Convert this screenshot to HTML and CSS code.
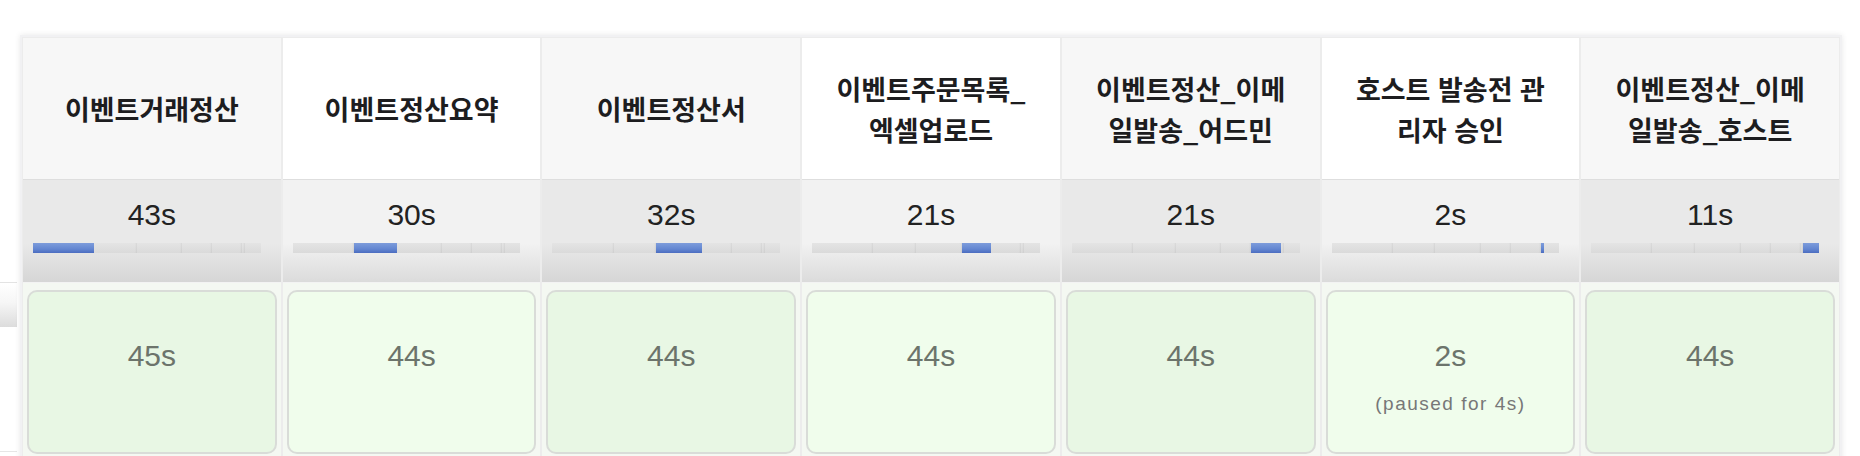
FILE: index.html
```html
<!DOCTYPE html>
<html lang="ko">
<head>
<meta charset="utf-8">
<title>Stage View</title>
<link rel="stylesheet" href="styles.css">
</head>
<body>
<div class="view">
  <div class="history">
    <div class="hist-head"></div>
    <div class="hist-body"></div>
  </div>
  <div class="stages">
    <div class="grid">
      <div class="hd odd">이벤트거래정산</div>
      <div class="hd even">이벤트정산요약</div>
      <div class="hd odd">이벤트정산서</div>
      <div class="hd even">이벤트주문목록_<br>엑셀업로드</div>
      <div class="hd odd">이벤트정산_이메<br>일발송_어드민</div>
      <div class="hd even">호스트 발송전 관<br>리자 승인</div>
      <div class="hd odd">이벤트정산_이메<br>일발송_호스트</div>

      <div class="avg odd"><div class="avg-time">43s</div>
        <div class="bar"><span class="seg s1 on"></span><span class="seg s2"></span><span class="seg s3"></span><span class="seg s4"></span><span class="seg s5"></span><span class="seg s6"></span><span class="seg s7"></span></div></div>
      <div class="avg even"><div class="avg-time">30s</div>
        <div class="bar"><span class="seg s1"></span><span class="seg s2 on"></span><span class="seg s3"></span><span class="seg s4"></span><span class="seg s5"></span><span class="seg s6"></span><span class="seg s7"></span></div></div>
      <div class="avg odd"><div class="avg-time">32s</div>
        <div class="bar"><span class="seg s1"></span><span class="seg s2"></span><span class="seg s3 on"></span><span class="seg s4"></span><span class="seg s5"></span><span class="seg s6"></span><span class="seg s7"></span></div></div>
      <div class="avg even"><div class="avg-time">21s</div>
        <div class="bar"><span class="seg s1"></span><span class="seg s2"></span><span class="seg s3"></span><span class="seg s4 on"></span><span class="seg s5"></span><span class="seg s6"></span><span class="seg s7"></span></div></div>
      <div class="avg odd"><div class="avg-time">21s</div>
        <div class="bar"><span class="seg s1"></span><span class="seg s2"></span><span class="seg s3"></span><span class="seg s4"></span><span class="seg s5 on"></span><span class="seg s6"></span><span class="seg s7"></span></div></div>
      <div class="avg even"><div class="avg-time">2s</div>
        <div class="bar"><span class="seg s1"></span><span class="seg s2"></span><span class="seg s3"></span><span class="seg s4"></span><span class="seg s5"></span><span class="seg s6 on"></span><span class="seg s7"></span></div></div>
      <div class="avg odd"><div class="avg-time">11s</div>
        <div class="bar"><span class="seg s1"></span><span class="seg s2"></span><span class="seg s3"></span><span class="seg s4"></span><span class="seg s5"></span><span class="seg s6"></span><span class="seg s7 on"></span></div></div>

      <div class="run odd"><div class="box"><div class="dur">45s</div></div></div>
      <div class="run even"><div class="box"><div class="dur">44s</div></div></div>
      <div class="run odd"><div class="box"><div class="dur">44s</div></div></div>
      <div class="run even"><div class="box"><div class="dur">44s</div></div></div>
      <div class="run odd"><div class="box"><div class="dur">44s</div></div></div>
      <div class="run even"><div class="box"><div class="dur">2s</div><div class="paused">(paused for 4s)</div></div></div>
      <div class="run odd"><div class="box"><div class="dur">44s</div></div></div>
    </div>
  </div>
</div>
</body>
</html>
```

FILE: styles.css
```css
html, body {
  margin: 0;
  padding: 0;
  background: #ffffff;
  overflow: hidden;
}

body {
  font-family: "Liberation Sans", Arial, sans-serif;
  color: #222;
}

.view {
  display: flex;
  align-items: flex-start;
  height: 456px;
}

.history {
  width: 17px;
  flex: none;
  padding-top: 282px;
}

.hist-head {
  height: 44px;
  border-top: 1px solid #e3e3e3;
  background: linear-gradient(#ffffff 0%, #f6f6f6 45%, #dcdcdc 100%);
}

.hist-body {
  height: 124px;
  border-bottom: 1px solid #e6e6e6;
}

.stages {
  margin-top: 35px;
  margin-left: 3px;
  width: 1818px;
  border: 2px solid #f1f1f3;
  border-bottom: 0;
  box-shadow: 0 0 6px rgba(0, 0, 0, 0.09);
  background: #ececec;
}

.grid {
  display: grid;
  grid-template-columns: repeat(7, 1fr);
  column-gap: 2px;
  padding: 1px 1px 0;
}

/* header row */
.hd {
  height: 141px;
  display: flex;
  align-items: center;
  justify-content: center;
  text-align: center;
  font-family: "Noto Sans CJK KR", "Noto Sans", sans-serif;
  font-weight: 700;
  font-size: 27px;
  line-height: 41px;
  color: #1d1d1f;
}
.hd.odd { background: #f7f7f7; }
.hd.even { background: #ffffff; }

/* average row */
.avg {
  border-top: 1px solid #dedede;
  padding-top: 17px;
  box-sizing: border-box;
  height: 103px;
}
.avg.odd { background: linear-gradient(#e9e9e9 0%, #e9e9e9 62%, #d6d6d6 100%); }
.avg.even { background: linear-gradient(#f2f2f2 0%, #f2f2f2 62%, #dbdbdb 100%); }

.avg-time {
  font-size: 30px;
  line-height: 36px;
  text-align: center;
  color: #222;
}

.bar {
  display: flex;
  height: 10px;
  margin: 10px 20px 0 10px;
  background: #dedede;
}

.seg {
  display: block;
  flex-basis: 0;
  background: linear-gradient(#e4e4e4, #dadada);
  box-shadow: inset -2px 0 2px -1px rgba(0, 0, 0, 0.06);
}
.seg.s7 { box-shadow: none; }
.seg.on {
  background: linear-gradient(#7d9cdb 0%, #6386d1 60%, #4b6cc0 100%);
  box-shadow: none;
}
.s1 { flex-grow: 43; }
.s2 { flex-grow: 30; }
.s3 { flex-grow: 32; }
.s4 { flex-grow: 21; }
.s5 { flex-grow: 21; }
.s6 { flex-grow: 2; }
.s7 { flex-grow: 11; }

/* run row */
.run {
  padding: 7px 4px 8px;
  border-top: 1px solid #f3f3f3;
  background: #f4f8f2;
  box-sizing: border-box;
}

.box {
  height: 164px;
  box-sizing: border-box;
  border: 2px solid #d9dcd8;
  border-radius: 10px;
  padding-top: 46px;
  text-align: center;
  color: #6c746b;
}
.run.odd .box { background: #e8f7e4; }
.run.even .box { background: #f0fdec; }

.dur {
  font-size: 30px;
  line-height: 36px;
}

.paused {
  margin-top: 18px;
  font-size: 19px;
  line-height: 24px;
  letter-spacing: 1.5px;
  color: #777;
}
```
